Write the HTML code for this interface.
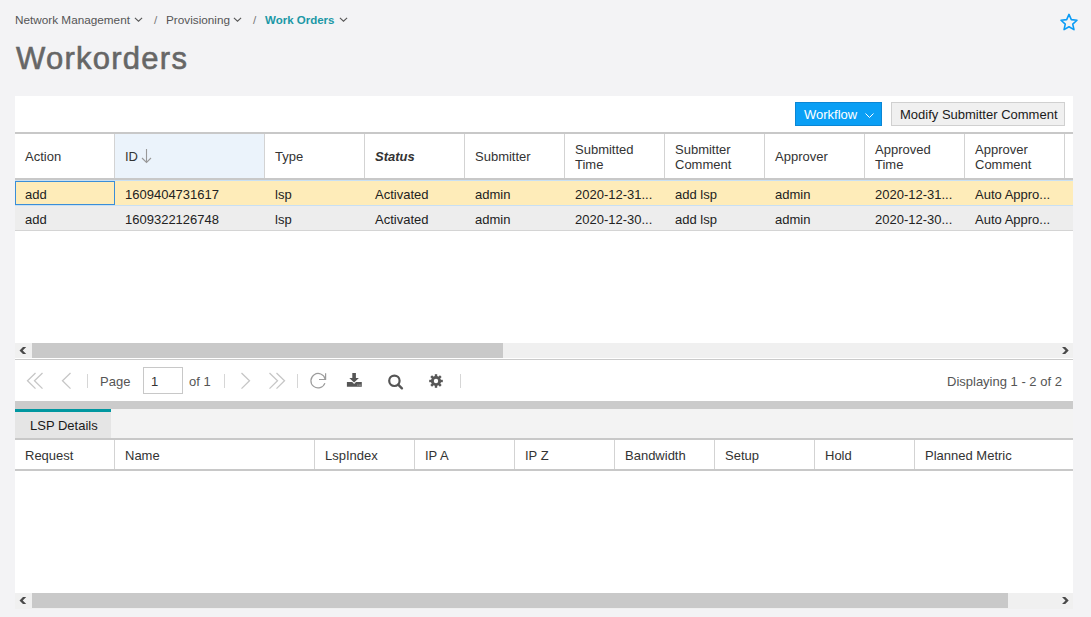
<!DOCTYPE html>
<html><head><meta charset="utf-8">
<style>
*{box-sizing:border-box;margin:0;padding:0}
html,body{width:1091px;height:617px;overflow:hidden}
body{position:relative;background:#f3f3f5;font-family:"Liberation Sans",sans-serif;color:#222}
.a{position:absolute;white-space:nowrap}
.t13{font-size:13px;line-height:15px}
.bc{font-size:11.75px;line-height:14px;color:#555}
.vl{position:absolute;background:#d3d3d3;width:1px}
.hl{position:absolute;background:#c8c8c8;height:1px}
svg{position:absolute;overflow:visible}
</style></head><body>

<!-- breadcrumb -->
<div class="a bc" style="left:15px;top:13px">Network Management</div>
<svg style="left:134px;top:17px" width="9" height="5"><path d="M0.9 0.9 L4.5 4.2 L8.1 0.9" fill="none" stroke="#555" stroke-width="1.1"/></svg>
<div class="a bc" style="left:154px;top:13px;color:#777">/</div>
<div class="a bc" style="left:166px;top:13px">Provisioning</div>
<svg style="left:233px;top:17px" width="9" height="5"><path d="M0.9 0.9 L4.5 4.2 L8.1 0.9" fill="none" stroke="#555" stroke-width="1.1"/></svg>
<div class="a bc" style="left:253px;top:13px;color:#777">/</div>
<div class="a bc" style="left:265px;top:13px;color:#1b98a6;font-weight:bold;font-size:11.5px">Work Orders</div>
<svg style="left:339px;top:17px" width="9" height="5"><path d="M0.9 0.9 L4.5 4.2 L8.1 0.9" fill="none" stroke="#555" stroke-width="1.1"/></svg>

<!-- star -->
<svg style="left:1055px;top:8px" width="30" height="27"><path d="M14.00 6.45 L16.32 11.66 L21.99 12.25 L17.75 16.07 L18.94 21.65 L14.00 18.80 L9.06 21.65 L10.25 16.07 L6.01 12.25 L11.68 11.66 Z" fill="none" stroke="#0a9bf5" stroke-width="1.6" stroke-linejoin="round"/></svg>

<!-- title -->
<div class="a" style="left:16px;top:42px;font-size:31px;line-height:34px;letter-spacing:1.25px;-webkit-text-stroke:0.6px #666;color:#666">Workorders</div>

<!-- panel -->
<div class="a" style="left:15px;top:96px;width:1058px;height:497px;background:#fff"></div>

<!-- buttons -->
<div class="a t13" style="left:795px;top:102px;width:87px;height:24px;background:#0a9ff5;border:1px solid #0b86d4;color:#fff;padding:4px 0 0 8px">Workflow</div>
<svg style="left:865px;top:113px" width="9" height="5"><path d="M0.5 0.5 L4.5 4.5 L8.5 0.5" fill="none" stroke="#fff" stroke-width="1"/></svg>
<div class="a t13" style="left:891px;top:102px;width:174px;height:24px;background:#f0f0f0;border:1px solid #d0d0d0;color:#1a1a1a;padding:4px 0 0 8px">Modify Submitter Comment</div>

<!-- grid header -->
<div class="a" style="left:15px;top:132px;width:1058px;height:2px;background:#c8c8c8"></div>
<div class="a" style="left:115px;top:134px;width:149px;height:44px;background:#ebf3fb"></div>
<div class="a" style="left:15px;top:178px;width:1058px;height:2px;background:#c8c8c8"></div>
<div id="hdrcols"></div>
<div class="vl" style="left:114px;top:134px;height:44px"></div>
<div class="vl" style="left:264px;top:134px;height:44px"></div>
<div class="vl" style="left:364px;top:134px;height:44px"></div>
<div class="vl" style="left:464px;top:134px;height:44px"></div>
<div class="vl" style="left:564px;top:134px;height:44px"></div>
<div class="vl" style="left:664px;top:134px;height:44px"></div>
<div class="vl" style="left:764px;top:134px;height:44px"></div>
<div class="vl" style="left:864px;top:134px;height:44px"></div>
<div class="vl" style="left:964px;top:134px;height:44px"></div>
<div class="vl" style="left:1064px;top:134px;height:44px"></div>

<div class="a t13" style="left:25px;top:149px;color:#333">Action</div>
<div class="a t13" style="left:125px;top:149px;color:#333">ID</div>
<svg style="left:141px;top:149px" width="11" height="15"><path d="M5.5 0 V13.5 M1 9 L5.5 13.5 L10 9" fill="none" stroke="#999" stroke-width="1.1"/></svg>
<div class="a t13" style="left:275px;top:149px;color:#333">Type</div>
<div class="a t13" style="left:375px;top:149px;color:#333;font-weight:bold;font-style:italic">Status</div>
<div class="a t13" style="left:475px;top:149px;color:#333">Submitter</div>
<div class="a t13" style="left:575px;top:142px;color:#333">Submitted<br>Time</div>
<div class="a t13" style="left:675px;top:142px;color:#333">Submitter<br>Comment</div>
<div class="a t13" style="left:775px;top:149px;color:#333">Approver</div>
<div class="a t13" style="left:875px;top:142px;color:#333">Approved<br>Time</div>
<div class="a t13" style="left:975px;top:142px;color:#333">Approver<br>Comment</div>

<!-- rows -->
<div class="a" style="left:15px;top:180px;width:1058px;height:1px;background:#c9e0f3"></div>
<div class="a" style="left:15px;top:181px;width:1058px;height:24px;background:#feecb9"></div>
<div class="a" style="left:15px;top:205px;width:1058px;height:1px;background:#c9e0f3"></div>
<div class="a" style="left:15px;top:206px;width:1058px;height:24px;background:#ededed"></div>
<div class="a" style="left:15px;top:230px;width:1058px;height:1px;background:#d4d4d4"></div>
<div class="a" style="left:15px;top:181px;width:100px;height:24px;border:1px solid #3a8ed8"></div>

<div id="r1">
<div class="a t13" style="left:25px;top:187px">add</div>
<div class="a t13" style="left:125px;top:187px">1609404731617</div>
<div class="a t13" style="left:275px;top:187px">lsp</div>
<div class="a t13" style="left:375px;top:187px">Activated</div>
<div class="a t13" style="left:475px;top:187px">admin</div>
<div class="a t13" style="left:575px;top:187px">2020-12-31...</div>
<div class="a t13" style="left:675px;top:187px">add lsp</div>
<div class="a t13" style="left:775px;top:187px">admin</div>
<div class="a t13" style="left:875px;top:187px">2020-12-31...</div>
<div class="a t13" style="left:975px;top:187px">Auto Appro...</div>
</div>
<div id="r2">
<div class="a t13" style="left:25px;top:212px">add</div>
<div class="a t13" style="left:125px;top:212px">1609322126748</div>
<div class="a t13" style="left:275px;top:212px">lsp</div>
<div class="a t13" style="left:375px;top:212px">Activated</div>
<div class="a t13" style="left:475px;top:212px">admin</div>
<div class="a t13" style="left:575px;top:212px">2020-12-30...</div>
<div class="a t13" style="left:675px;top:212px">add lsp</div>
<div class="a t13" style="left:775px;top:212px">admin</div>
<div class="a t13" style="left:875px;top:212px">2020-12-30...</div>
<div class="a t13" style="left:975px;top:212px">Auto Appro...</div>
</div>

<!-- scrollbar 1 -->
<div class="a" style="left:15px;top:343px;width:1058px;height:15px;background:#f0f0f0"></div>
<div class="a" style="left:32px;top:343px;width:471px;height:15px;background:#c9c9c9"></div>
<div class="a" style="left:15px;top:359px;width:1058px;height:1px;background:#cacaca"></div>

<!-- toolbar -->
<div id="toolbar">
<svg style="left:26px;top:372px" width="18" height="18"><path d="M9.5 1 L1.5 8.8 L9.5 16.6 M16.5 1 L8.5 8.8 L16.5 16.6" fill="none" stroke="#c6c6c6" stroke-width="1.3"/></svg>
<svg style="left:61px;top:372px" width="11" height="18"><path d="M9.5 1 L1.5 8.8 L9.5 16.6" fill="none" stroke="#c6c6c6" stroke-width="1.3"/></svg>
<div class="a" style="left:87px;top:374px;width:1px;height:14px;background:#d6d6d6"></div>
<div class="a t13" style="left:100px;top:374px;color:#555">Page</div>
<div class="a t13" style="left:143px;top:367px;width:40px;height:27px;border:1px solid #c8c8c8;background:#fff;color:#333;padding:6px 0 0 7px">1</div>
<div class="a t13" style="left:189px;top:374px;color:#555">of 1</div>
<div class="a" style="left:224px;top:374px;width:1px;height:14px;background:#d6d6d6"></div>
<svg style="left:240px;top:372px" width="11" height="18"><path d="M1.5 1 L9.5 8.8 L1.5 16.6" fill="none" stroke="#c6c6c6" stroke-width="1.3"/></svg>
<svg style="left:268px;top:372px" width="18" height="18"><path d="M1.5 1 L9.5 8.8 L1.5 16.6 M8.5 1 L16.5 8.8 L8.5 16.6" fill="none" stroke="#c6c6c6" stroke-width="1.3"/></svg>
<div class="a" style="left:297px;top:374px;width:1px;height:14px;background:#d6d6d6"></div>
<svg style="left:308px;top:371px" width="20" height="20"><path d="M16.9 12.1 A7.2 7.2 0 1 1 17.1 8.0" fill="none" stroke="#9c9c9c" stroke-width="1.2"/><path d="M17.6 2.2 V8.5 H11" fill="none" stroke="#9c9c9c" stroke-width="1.2"/></svg>
<svg style="left:346px;top:372px" width="17" height="16"><path d="M6.3 1 H9.9 V6 H12.9 L8.1 10.5 L3.3 6 H6.3 Z" fill="#555"/><path d="M0.9 10 H6.2 L8.1 11.9 L10.0 10 H15.8 V14.7 H0.9 Z" fill="#555"/><rect x="11.3" y="12.6" width="1" height="1" fill="#b0b0b0"/><rect x="12.8" y="12.6" width="1" height="1" fill="#b0b0b0"/><rect x="14.2" y="12.6" width="1" height="1" fill="#b0b0b0"/></svg>
<svg style="left:386px;top:374px" width="18" height="17"><circle cx="8.4" cy="6.8" r="5.2" fill="none" stroke="#555" stroke-width="2.2"/><path d="M12.2 10.6 L15.9 14.3" stroke="#555" stroke-width="2.4" stroke-linecap="round"/></svg>
<svg style="left:428px;top:373px" width="16" height="16" viewBox="0 0 16 16"><g fill="#585858"><circle cx="8" cy="8" r="5.1"/><rect x="6.8" y="1.2" width="2.4" height="3.2"/><rect x="6.8" y="11.6" width="2.4" height="3.2"/><rect x="1.2" y="6.8" width="3.2" height="2.4"/><rect x="11.6" y="6.8" width="3.2" height="2.4"/><g transform="rotate(45 8 8)"><rect x="6.8" y="1.2" width="2.4" height="3.2"/><rect x="6.8" y="11.6" width="2.4" height="3.2"/><rect x="1.2" y="6.8" width="3.2" height="2.4"/><rect x="11.6" y="6.8" width="3.2" height="2.4"/></g></g><circle cx="8" cy="8" r="2.2" fill="#fff"/></svg>
<div class="a" style="left:460px;top:374px;width:1px;height:14px;background:#d6d6d6"></div>
<div class="a t13" style="left:947px;top:374px;color:#555">Displaying 1 - 2 of 2</div>
</div>

<!-- grey bar + tab -->
<div class="a" style="left:15px;top:401px;width:1058px;height:8px;background:#cbcbcb"></div>
<div class="a" style="left:15px;top:409px;width:1058px;height:29px;background:#f3f3f3"></div>
<div class="a" style="left:15px;top:409px;width:96px;height:3px;background:#0097a0"></div>
<div class="a" style="left:15px;top:412px;width:96px;height:26px;background:#e5e5e5"></div>
<div class="a t13" style="left:30px;top:418px;color:#1a1a1a">LSP Details</div>

<!-- lower grid header -->
<div class="a" style="left:15px;top:438px;width:1058px;height:2px;background:#c8c8c8"></div>
<div class="a" style="left:15px;top:469px;width:1058px;height:2px;background:#c8c8c8"></div>
<div class="vl" style="left:114px;top:440px;height:29px"></div>
<div class="vl" style="left:314px;top:440px;height:29px"></div>
<div class="vl" style="left:414px;top:440px;height:29px"></div>
<div class="vl" style="left:514px;top:440px;height:29px"></div>
<div class="vl" style="left:614px;top:440px;height:29px"></div>
<div class="vl" style="left:714px;top:440px;height:29px"></div>
<div class="vl" style="left:814px;top:440px;height:29px"></div>
<div class="vl" style="left:914px;top:440px;height:29px"></div>
<div class="a t13" style="left:25px;top:448px;color:#333">Request</div>
<div class="a t13" style="left:125px;top:448px;color:#333">Name</div>
<div class="a t13" style="left:325px;top:448px;color:#333">LspIndex</div>
<div class="a t13" style="left:425px;top:448px;color:#333">IP A</div>
<div class="a t13" style="left:525px;top:448px;color:#333">IP Z</div>
<div class="a t13" style="left:625px;top:448px;color:#333">Bandwidth</div>
<div class="a t13" style="left:725px;top:448px;color:#333">Setup</div>
<div class="a t13" style="left:825px;top:448px;color:#333">Hold</div>
<div class="a t13" style="left:925px;top:448px;color:#333">Planned Metric</div>

<!-- scrollbar 2 -->
<div class="a" style="left:15px;top:593px;width:1058px;height:16px;background:#f0f0f0"></div>
<div class="a" style="left:32px;top:593px;width:976px;height:15px;background:#c9c9c9"></div>

<svg style="left:0;top:0" width="1091" height="617"><g fill="#4a4a4a">
<path d="M23 347 H26.2 L22.7 350.5 L26.2 354 H23 L19.5 350.5 Z"/>
<path d="M1062 347 H1065.2 L1068.7 350.5 L1065.2 354 H1062 L1065.5 350.5 Z"/>
<path d="M23 597 H26.2 L22.7 600.5 L26.2 604 H23 L19.5 600.5 Z"/>
<path d="M1062 597 H1065.2 L1068.7 600.5 L1065.2 604 H1062 L1065.5 600.5 Z"/>
</g></svg>
</body></html>
